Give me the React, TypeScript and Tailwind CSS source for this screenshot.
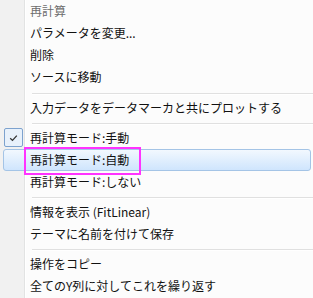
import React from "react";

const font = { fontFamily: '"Noto Sans CJK JP", "Noto Sans", sans-serif' };

function Row({ text, gray }: { text: string; gray?: boolean }) {
  return (
    <div className={`flex h-[22px] items-center pl-[30px] text-[12px] leading-none ${gray ? "text-[#6d6d6d]" : "text-[#111]"}`}>
      <span>{text}</span>
    </div>
  );
}

function Sep({ first }: { first?: boolean }) {
  return (
    <div className={first ? "h-[9px] pl-[32px] pt-[5px]" : "h-[8px] pl-[32px] pt-[4px]"}>
      <div className="h-px bg-[#e0e0e0]" />
      <div className="h-px bg-white" />
    </div>
  );
}

export default function App() {
  return (
    <div
      className="relative h-[298px] w-[313px] overflow-hidden bg-[linear-gradient(to_right,#f1f1f1_24px,#e2e3e3_24px,#e2e3e3_25px,#ffffff_25px,#ffffff_26px,#fcfcfc_26px)]"
      style={font}
    >
      <Row text="再計算" gray />
      <Row text="パラメータを変更..." />
      <Row text="削除" />
      <Row text="ソースに移動" />
      <Sep first />
      <Row text="入力データをデータマーカと共にプロットする" />
      <Sep />
      <div className="relative flex h-[22px] items-center pl-[30px] text-[12px] leading-none text-[#111]">
        <div className="absolute left-[4px] top-[1px] flex h-[19px] w-[19px] items-center justify-center rounded-[2px] border border-[#7da2ce] bg-[#e8f1fb]">
          <svg width="9" height="8" viewBox="0 0 9 8">
            <path d="M1.2 4.2 L3.5 6.4 L7.8 1.6" fill="none" stroke="#333" strokeWidth="1.3" />
          </svg>
        </div>
        <span>再計算モード:手動</span>
      </div>
      <div className="relative h-[22px]">
        <div className="ml-[3px] mr-[2px] flex h-[22px] items-center rounded-[3px] border border-[#a4c4e6] bg-[linear-gradient(to_bottom,#f2f8fe,#cfe5fd)] pl-[26px] text-[12px] leading-none text-[#111]">
          <span>再計算モード:自動</span>
        </div>
        <div className="absolute left-[24px] top-[-2px] h-[28px] w-[117px] border-2 border-[#ff33ff]" />
      </div>
      <Row text="再計算モード:しない" />
      <Sep />
      <Row text="情報を表示 (FitLinear)" />
      <Row text="テーマに名前を付けて保存" />
      <Sep />
      <Row text="操作をコピー" />
      <Row text="全てのY列に対してこれを繰り返す" />
    </div>
  );
}
